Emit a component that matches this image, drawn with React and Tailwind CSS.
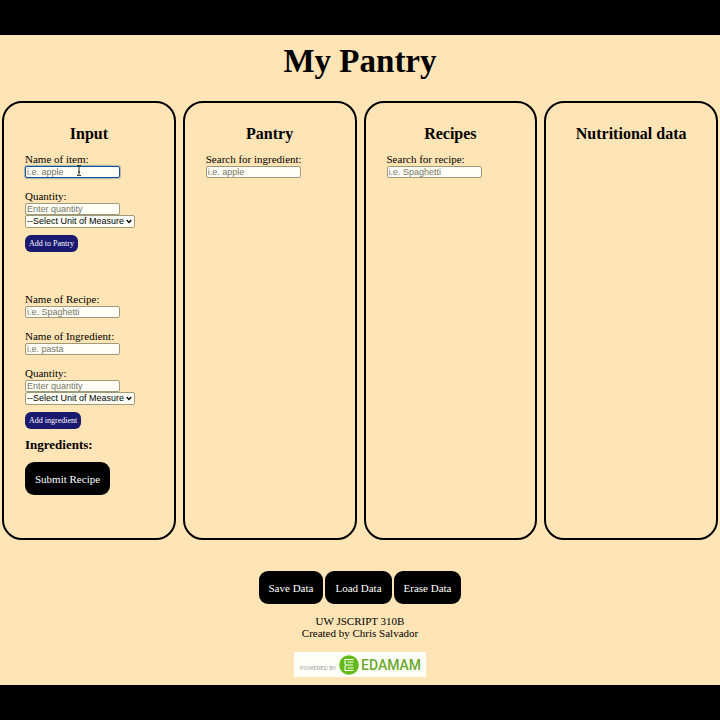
import React from "react";

const units = ["--Select Unit of Measure", "cups", "ounces", "pounds", "grams", "each"];

function Panel({ title, children }) {
  return (
    <section className="min-w-0 rounded-[20px] border-2 border-black px-[21px] pt-[21px] pb-[43px]">
      <h2 className="whitespace-nowrap text-center text-[16px] font-bold leading-[20px]">{title}</h2>
      <div className="pt-[9px]">{children}</div>
    </section>
  );
}

function Field({ id, label, placeholder, focused }) {
  return (
    <div className="relative flex flex-col items-start">
      <label htmlFor={id} className="whitespace-nowrap leading-[13px]">{label}</label>
      <input
        id={id}
        type="text"
        placeholder={placeholder}
        className={
          "h-[12px] w-[95px] rounded-[2px] border bg-[#fffff8] px-px font-['Liberation_Sans',Arial,sans-serif] text-[9px] leading-[10px] outline-none placeholder:text-[#757560] " +
          (focused ? "border-[#10529c] ring-1 ring-[#10529c]/30" : "border-[#a09a78]")
        }
      />
      {focused && (
        <svg className="absolute left-[51px] top-[12px]" width="6" height="11" viewBox="0 0 6 11" fill="none" stroke="#222" aria-hidden="true">
          <path d="M1 .5h1.500l.5.5.5-.5H5M3 1v9M1 10.500h1.500L3 10l.5.5H5M2 7h2" />
        </svg>
      )}
    </div>
  );
}

function UnitSelect({ id }) {
  return (
    <div className="relative w-[110px]">
      <select
        id={id}
        aria-label="Unit of measure"
        className="block h-[13px] w-full appearance-none rounded-[2px] border border-[#a09a78] bg-[#fffff8] pl-[1px] font-['Liberation_Sans',Arial,sans-serif] text-[9px] leading-[11px] text-black"
      >
        {units.map((u) => (
          <option key={u}>{u}</option>
        ))}
      </select>
      <svg className="pointer-events-none absolute right-[3px] top-[4px]" width="6" height="5" viewBox="0 0 6 5" fill="none" stroke="black" strokeWidth="1.3" aria-hidden="true">
        <path d="M.7 1 3 3.500 5.300 1" />
      </svg>
    </div>
  );
}

function SmallButton({ children }) {
  return (
    <button type="button" className="mt-[7px] block h-[17px] whitespace-nowrap rounded-[6px] bg-[#191970] px-[4px] text-[8px] leading-[18px] text-white">
      {children}
    </button>
  );
}

function BigButton({ children }) {
  return (
    <button type="button" className="h-[33px] whitespace-nowrap rounded-[9px] bg-black px-[10px] text-[11px] leading-[34px] text-white">
      {children}
    </button>
  );
}

function Edamam() {
  return (
    <a href="#edamam" aria-label="Powered by Edamam" className="flex h-[25px] w-[132px] items-center bg-[#fffffa] pl-[6px] font-['Roboto',sans-serif]">
      <span className="w-[39px] whitespace-nowrap pt-[6px] text-[6px] leading-[8px] text-[#a3a3a3]">POWERED BY</span>
      <svg width="20" height="20" viewBox="0 0 20 20" aria-hidden="true">
        <circle cx="10" cy="10" r="9.800" fill="#62bb1a" />
        <g fill="none" stroke="white" strokeLinejoin="round">
          <path d="M14.500 4.500H6V8.500L7 10L6 11.500V15.500H14.500" strokeWidth="1.100" />
          <path d="M14.500 7H8.500M7 10H14M14.500 13H8.500" strokeWidth="1.100" />
        </g>
      </svg>
      <span className="pl-[2px] text-[14px] font-medium leading-[20px] text-[#6ba82c]">EDAMAM</span>
    </a>
  );
}

export default function App() {
  return (
    <div className="flex min-h-screen flex-col border-y-[35px] border-black bg-[#ffe4b5] font-['Liberation_Serif','Times_New_Roman',serif] text-[11px] text-black">
      <h1 className="pt-[5px] text-center text-[33px] font-bold leading-[42px]">My Pantry</h1>

      <main className="mt-[19px] grid grid-cols-4 gap-[7px] px-[2px]">
        <Panel title="Input">
          <form className="flex flex-col items-start">
            <div className="flex flex-col gap-[12px]">
              <Field id="item" label="Name of item:" placeholder="i.e. apple" focused />
              <Field id="item-quantity" label="Quantity:" placeholder="Enter quantity" />
            </div>
            <UnitSelect id="item-unit" />
            <SmallButton>Add to Pantry</SmallButton>
          </form>
          <form className="mt-[41px] flex flex-col items-start">
            <div className="flex flex-col gap-[12px]">
              <Field id="recipe" label="Name of Recipe:" placeholder="i.e. Spaghetti" />
              <Field id="ingredient" label="Name of Ingredient:" placeholder="i.e. pasta" />
              <Field id="ingredient-quantity" label="Quantity:" placeholder="Enter quantity" />
            </div>
            <UnitSelect id="ingredient-unit" />
            <SmallButton>Add ingredient</SmallButton>
            <h3 className="mt-[8px] mb-[10px] text-[13px] font-bold leading-[15px]">Ingredients:</h3>
            <BigButton>Submit Recipe</BigButton>
          </form>
        </Panel>
        <Panel title="Pantry">
          <Field id="search-ingredient" label="Search for ingredient:" placeholder="i.e. apple" />
        </Panel>
        <Panel title="Recipes">
          <Field id="search-recipe" label="Search for recipe:" placeholder="i.e. Spaghetti" />
        </Panel>
        <Panel title="Nutritional data" />
      </main>

      <footer className="flex flex-col items-center pt-[31px] pb-[8px]">
        <div className="flex gap-[2px]">
          <BigButton>Save Data</BigButton>
          <BigButton>Load Data</BigButton>
          <BigButton>Erase Data</BigButton>
        </div>
        <p className="mt-[11px] mb-[13px] text-center leading-[12px]">
          UW JSCRIPT 310B
          <br />
          Created by Chris Salvador
        </p>
        <Edamam />
      </footer>
    </div>
  );
}
